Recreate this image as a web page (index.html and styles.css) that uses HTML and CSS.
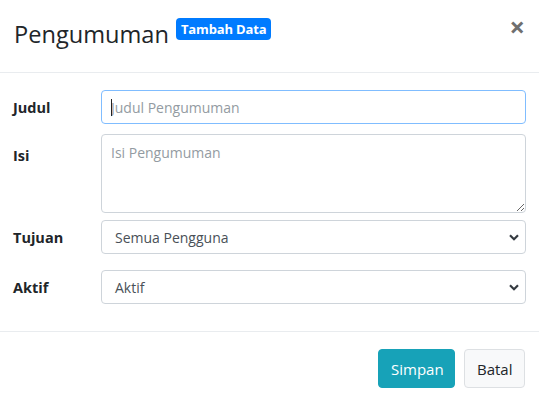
FILE: index.html
```html
<!DOCTYPE html>
<html lang="id">
<head>
<meta charset="utf-8">
<title>Pengumuman</title>
<link rel="stylesheet" href="styles.css">
</head>
<body>
<div class="modal">
  <div class="modal-header">
    <h4 class="modal-title">Pengumuman<span class="badge">Tambah Data</span></h4>
    <span class="close">&times;</span>
  </div>
  <div class="modal-body">
    <div class="form-row row-judul">
      <label class="form-label">Judul</label>
      <div class="control-wrap">
        <input class="form-control focused" type="text" placeholder="Judul Pengumuman">
        <span class="caret"></span>
      </div>
    </div>
    <div class="form-row row-isi">
      <label class="form-label label-top">Isi</label>
      <textarea class="form-control textarea" placeholder="Isi Pengumuman"></textarea>
    </div>
    <div class="form-row row-tujuan">
      <label class="form-label">Tujuan</label>
      <div class="form-control select">
        <span>Semua Pengguna</span>
        <svg class="chevron" width="10" height="7" viewBox="0 0 10 7"><path d="M1 1.2 L5 5.2 L9 1.2" fill="none" stroke="#343a40" stroke-width="2.2"/></svg>
      </div>
    </div>
    <div class="form-row row-aktif">
      <label class="form-label">Aktif</label>
      <div class="form-control select">
        <span>Aktif</span>
        <svg class="chevron" width="10" height="7" viewBox="0 0 10 7"><path d="M1 1.2 L5 5.2 L9 1.2" fill="none" stroke="#343a40" stroke-width="2.2"/></svg>
      </div>
    </div>
  </div>
  <div class="modal-footer">
    <button class="btn btn-info">Simpan</button>
    <button class="btn btn-light">Batal</button>
  </div>
</div>
</body>
</html>
```
FILE: styles.css
```css
* { box-sizing: border-box; }
html, body { margin: 0; padding: 0; background: #fff; }
body {
  font-family: "Open Sans", "Noto Sans", sans-serif;
  color: #212529;
  width: 539px;
  height: 403px;
  overflow: hidden;
}
.modal { width: 539px; }
.modal-header {
  height: 73px;
  border-bottom: 1px solid #e9ecef;
  display: flex;
  align-items: flex-start;
  justify-content: space-between;
  padding: 0 14px 0 14px;
}
.modal-title {
  margin: 0;
  padding-top: 18px;
  font-size: 23.6px;
  font-weight: 400;
  line-height: 32px;
  color: #212529;
  display: flex;
  align-items: flex-start;
}
.badge {
  display: inline-block;
  margin-left: 7px;
  margin-top: 0;
  background: #007bff;
  color: #fff;
  font-size: 13px;
  font-weight: 700;
  line-height: 22px;
  height: 22px;
  padding: 0 5px;
  border-radius: 4px;
  letter-spacing: -0.15px;
}
.close {
  margin-top: 12px;
  font-size: 27px;
  font-weight: 700;
  color: #6f6f6f;
  line-height: 30px;
}
.modal-body {
  height: 259px;
  border-bottom: 1px solid #e9ecef;
  padding: 17px 13px 0 13px;
}
.form-row {
  display: flex;
  align-items: center;
}
.row-judul { margin-bottom: 10px; }
.row-isi { margin-bottom: 7px; align-items: flex-start; }
.row-tujuan { margin-bottom: 16px; }
.form-label {
  width: 88px;
  font-size: 14.5px;
  font-weight: 700;
  color: #212529;
}
.label-top { padding-top: 12px; }
.control-wrap { position: relative; }
.form-control {
  width: 425px;
  height: 34px;
  border: 1px solid #ced4da;
  border-radius: 4px;
  font-family: "Open Sans", "Noto Sans", sans-serif;
  font-size: 14px;
  color: #495057;
  padding: 0 9px;
  background: #fff;
  outline: none;
}
.form-control::placeholder { color: #939ba2; }
.focused { border-color: #80bdff; }
.caret {
  position: absolute;
  left: 10px;
  top: 9px;
  width: 1px;
  height: 17px;
  background: #222;
}
.textarea {
  height: 79px;
  padding: 8px 9px;
  resize: vertical;
  display: block;
}
.select {
  display: flex;
  align-items: center;
  justify-content: space-between;
  padding: 0 6px 0 13px;
  font-size: 14px;
}
.chevron { display: block; }
.modal-footer {
  display: flex;
  justify-content: flex-end;
  gap: 9px;
  padding: 17px 14px 0 0;
}
.btn {
  height: 39px;
  border-radius: 4px;
  font-family: "Open Sans", "Noto Sans", sans-serif;
  font-size: 15px;
  padding: 0 12px;
  cursor: pointer;
}
.btn-info {
  width: 77px;
  background: #17a2b8;
  border: 1px solid #17a2b8;
  color: #fff;
}
.btn-light {
  width: 61px;
  background: #f8f9fa;
  border: 1px solid #dde0e3;
  color: #212529;
}
```
